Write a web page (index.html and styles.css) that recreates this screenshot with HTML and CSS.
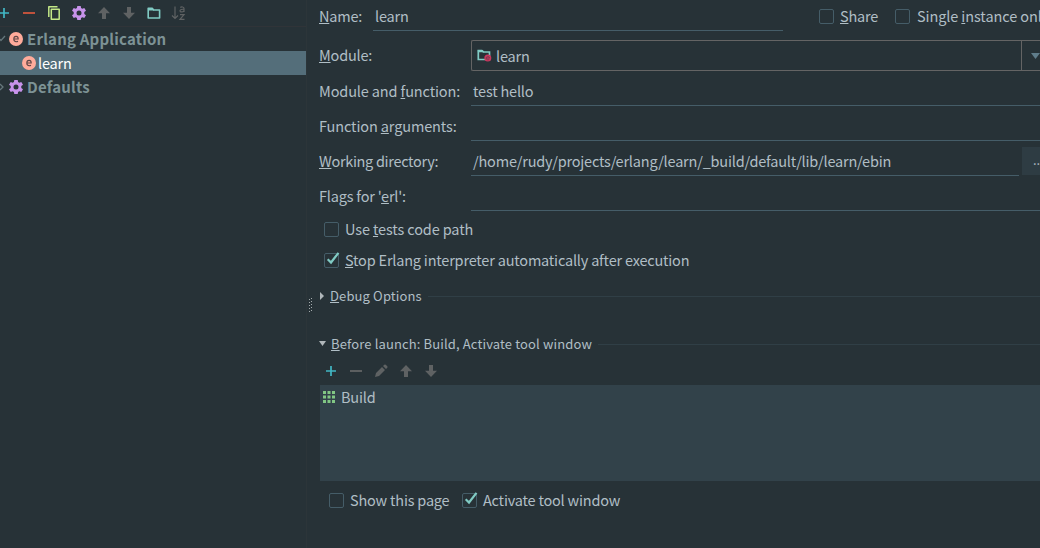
FILE: index.html
```html
<!DOCTYPE html>
<html lang="en">
<head>
<meta charset="utf-8">
<title>Run/Debug Configurations</title>
<link rel="stylesheet" href="styles.css">
</head>
<body>
<svg class="defs" width="0" height="0">
  <symbol id="plus" viewBox="0 0 16 16"><path d="M8 3v10M3 8h10" stroke="#42b7c4" stroke-width="1.7" fill="none"/></symbol>
  <symbol id="minus" viewBox="0 0 16 16"><path d="M2 8h12" stroke="currentColor" stroke-width="1.900" fill="none"/></symbol>
  <symbol id="copy" viewBox="0 0 16 16"><path d="M11.500 1.700H2.800V12M5.300 4.300h7.900v10H5.300z" stroke="#c3e887" stroke-width="1.500" fill="none" stroke-linejoin="round"/></symbol>
  <symbol id="gear" viewBox="0 0 16 16"><path fill="#c792ea" fill-rule="evenodd" d="M6.300 1h3.400l.4 2 1.200.7 2-.8 1.700 2.800L13.300 7v2l1.700 1.300-1.700 2.800-2-.8-1.200.7-.4 2H6.300l-.4-2-1.200-.7-2 .8L1 10.300 2.700 9V7L1 5.700l1.700-2.800 2 .8L5.900 3zM8 5.500a2.500 2.500 0 1 0 0 5 2.500 2.500 0 0 0 0-5z"/></symbol>
  <symbol id="up" viewBox="0 0 16 16"><path d="M8 2l6 6.300h-4V14H6V8.300H2z" fill="#5f6263"/></symbol>
  <symbol id="down" viewBox="0 0 16 16"><path d="M8 14l6-6.300h-4V2H6v5.700H2z" fill="#5f6263"/></symbol>
  <symbol id="folder" viewBox="0 0 16 16"><path d="M2.200 3.300h4L7.700 5h5.900v8H2.200z" stroke="#80cbc4" stroke-width="1.600" fill="none" stroke-linejoin="round"/><path d="M2 3h4.500l1.500 2.500H2z" fill="#80cbc4"/></symbol>
  <symbol id="erl" viewBox="0 0 16 16"><circle cx="8" cy="8" r="7" fill="#ffab9b"/><path d="M5.900 8h4.300c0-1.700-.8-2.600-2.100-2.600S5.800 6.500 5.800 8.100s.9 2.600 2.400 2.600c.7 0 1.300-.2 1.800-.5" stroke="#5d4545" stroke-width="1.100" fill="none"/></symbol>
  <symbol id="pencil" viewBox="0 0 16 16"><path d="M2 14l1-4 6-6 3 3-6 6zM10 3l1.300-1.300q.7-.5 1.400 0l1.600 1.600q.5.7 0 1.400L13 6z" fill="#5f6263"/></symbol>
  <symbol id="tick" viewBox="0 0 16 16"><path d="M3.700 7.200L7 10.500 14.500.8" stroke="#80cbc4" stroke-width="2.200" fill="none"/></symbol>
</svg>
<div class="dialog">
  <aside class="sidebar">
    <div class="toolbar">
      <svg class="icon"><use href="#plus"/></svg>
      <svg class="icon danger"><use href="#minus"/></svg>
      <svg class="icon"><use href="#copy"/></svg>
      <svg class="icon"><use href="#gear"/></svg>
      <svg class="icon"><use href="#up"/></svg>
      <svg class="icon"><use href="#down"/></svg>
      <svg class="icon"><use href="#folder"/></svg>
      <svg class="icon" viewBox="0 0 16 16" fill="none" stroke="#5f6263" stroke-width="1.200"><path d="M4 1.500v12M1 10.500l3 3 3-3M9.300 2.500c1-.9 3.700-.8 3.700 1V7M13 4.300c-2-.2-4 .1-4 1.500 0 1.600 3 1.500 4 0M9 9.700h4L9 14.300h4.500"/></svg>
    </div>
    <div class="node group">
      <svg class="chevron" viewBox="0 0 6 8"><path d="M0 4l1 1.500L5 1" /></svg>
      <svg class="icon"><use href="#erl"/></svg><span>Erlang Application</span>
    </div>
    <div class="node selected">
      <svg class="icon"><use href="#erl"/></svg><span>learn</span>
    </div>
    <div class="node group">
      <svg class="chevron" viewBox="0 0 6 8"><path d="M0 1l3 3-3 3"/></svg>
      <svg class="icon"><use href="#gear"/></svg><span>Defaults</span>
    </div>
  </aside>
  <div class="splitter"><svg width="6" height="16"><path d="M.5 1v14M2.500 0v14" stroke="#a5acae" stroke-width="1" stroke-dasharray="1 2"/></svg></div>
  <main class="panel">
    <div class="name-row">
      <label class="name-label"><u>N</u>ame:</label>
      <div class="field name-field">learn</div>
      <label class="check share"><i class="box"></i><span><u>S</u>hare</span></label>
      <label class="check single"><i class="box"></i><span>Single <u>i</u>nstance only</span></label>
    </div>
    <div class="row module-row">
      <label><u>M</u>odule:</label>
      <div class="combo">
        <div class="combo-value">
          <svg class="module-icon" viewBox="0 0 15 13"><path d="M1.300 1.500h3.500L6.500 3h6v7.500H1.300z" stroke="#80cbc4" stroke-width="1.700" fill="none"/><path d="M.8 1h4.500l1.500 2.200h-6z" fill="#80cbc4"/><circle cx="10.800" cy="9" r="3.500" fill="#c8375e"/><path d="M9 9h3.500c0-2-3.300-2-3.300.2 0 1.800 2 2 3 1.200" stroke="#70384b" fill="none" stroke-width=".8"/></svg>
          <span>learn</span>
        </div>
        <div class="combo-arrow"><svg width="10" height="6"><path d="M1 0h9L5.500 6z" fill="#607d8b"/></svg></div>
      </div>
    </div>
    <div class="row"><label class="wide">Module and <u>f</u>unction:</label><div class="field">test hello</div></div>
    <div class="row"><label class="wide">Function <u>a</u>rguments:</label><div class="field"></div></div>
    <div class="row"><label class="tight"><u>W</u>orking directory:</label><div class="field path">/home/rudy/projects/erlang/learn/_build/default/lib/learn/ebin</div><div class="browse">...</div></div>
    <div class="row"><label>Flags for '<u>e</u>rl':</label><div class="field"></div></div>
    <div class="options">
      <label class="check wide"><i class="box"></i><span>Use <u>t</u>ests code path</span></label>
      <label class="check"><i class="box"><svg><use href="#tick"/></svg></i><span><u>S</u>top Erlang interpreter automatically after execution</span></label>
    </div>
    <div class="section">
      <svg class="twisty" viewBox="0 0 8 8"><path d="M1 0l4 4-4 4z"/></svg><span><u>D</u>ebug Options</span><hr>
    </div>
    <div class="section before">
      <svg class="twisty" viewBox="0 0 8 8"><path d="M0 1h7L3.500 6z"/></svg><span><u>B</u>efore launch: Build, Activate tool window</span><hr>
    </div>
    <div class="task-tools">
      <svg class="icon"><use href="#plus"/></svg>
      <svg class="icon muted"><use href="#minus"/></svg>
      <svg class="icon"><use href="#pencil"/></svg>
      <svg class="icon"><use href="#up"/></svg>
      <svg class="icon"><use href="#down"/></svg>
    </div>
    <div class="tasks">
      <div class="task"><svg width="12" height="12" fill="#81c784"><path d="M0 0h3v3H0zM4.500 0h3v3h-3zM9 0h3v3H9zM0 4.500h3v3H0zM4.500 4.500h3v3h-3zM9 4.500h3v3H9zM0 9h3v3H0zM4.500 9h3v3h-3zM9 9h3v3H9z"/></svg><span>Build</span></div>
    </div>
    <div class="footer">
      <label class="check"><i class="box"></i><span>Show this page</span></label>
      <label class="check"><i class="box"><svg><use href="#tick"/></svg></i><span>Activate tool window</span></label>
    </div>
  </main>
</div>
</body>
</html>
```
FILE: styles.css
```css
* { box-sizing: border-box; }
body {
  margin: 0;
  height: 548px;
  overflow: hidden;
  background: #273237;
  color: #b0bec5;
  font: 14.5px/24px "Noto Sans CJK SC", "Noto Sans", sans-serif;
  letter-spacing: -0.2px;
  white-space: nowrap;
}
svg { display: block; flex: none; }
.defs { position: absolute; }
u { text-decoration-thickness: 1px; text-underline-offset: 1px; text-decoration-skip-ink: none; }
.icon { width: 16px; height: 16px; }
.danger { color: #c8553d; }
.muted { color: #5f6263; }
.wide { letter-spacing: -0.13px; }
.tight { letter-spacing: -0.31px; }
.dialog { display: flex; height: 548px; }

.sidebar { width: 306px; flex: none; overflow: hidden; }
.toolbar { display: flex; align-items: center; gap: 9px; height: 27px; padding-left: 0; margin-left: -4px; border-bottom: 1px solid #303438; }
.node { display: flex; align-items: center; height: 24px; }
.node span { margin-left: 3px; line-height: 22px; }
.group { color: #7d9295; font-size: 15px; font-weight: 700; letter-spacing: 0.2px; }
.chevron { width: 6px; height: 8px; margin-right: 2px; fill: none; stroke: #66777c; stroke-width: 1.3; }
.selected { padding-left: 21px; background: #546e7a; color: #fff; }
.selected span { margin-left: 1px; }

.splitter { width: 13px; flex: none; padding: 298px 0 0 2px; border-left: 1px solid #2c3539; }

.panel { width: 721px; flex: none; overflow: hidden; }
.name-row { display: flex; height: 40px; }
.name-label { width: 54px; flex: none; line-height: 32px; }
.field { height: 31px; line-height: 32px; padding-left: 2px; border-bottom: 1px solid #455d68; flex: 1; }
.name-field { flex: none; width: 410px; margin-right: 36px; }
.name-row .check { height: 33px; flex: none; }
.name-row .check span { line-height: 22px; margin-top: -1px; }
.name-row .share { width: 76px; }
.name-row .single { gap: 7px; letter-spacing: -0.1px; }
.check { display: flex; align-items: center; gap: 6px; height: 24px; }
.box { width: 15px; height: 15px; flex: none; border: 1px solid #455d68; border-radius: 2px; }
.box svg { width: 16px; height: 16px; margin: -2px 0 0 -1px; overflow: visible; }

.row { display: flex; height: 35px; padding-top: 4px; }
.row label { width: 152px; flex: none; line-height: 32px; }
.row.module-row { padding: 0; height: 31px; }
.module-row label { line-height: 30px; }
.combo { flex: 1; display: flex; height: 31px; border: 1px solid #646464; border-right: 0; border-radius: 2px 0 0 2px; }
.combo-value { display: flex; align-items: center; gap: 4px; flex: 1; padding-left: 5px; }
.module-icon { width: 15px; height: 13px; }
.combo-arrow { width: 19px; border-left: 1px solid #646464; padding: 12px 0 0 8px; overflow: hidden; }
.path { margin-right: 3px; }
.browse { width: 18px; height: 28px; margin-top: 2px; padding: 1px 0 0 11px; background: #2e3c43; font-size: 13px; letter-spacing: 0; overflow: hidden; }

.options { display: flex; flex-direction: column; gap: 7px; padding: 6px 0 0 5px; }
.section { display: flex; align-items: center; height: 24px; margin-top: 12px; font-size: 13px; letter-spacing: 0.13px; }
.section span { margin: 0 6px 0 3px; }
.section hr { flex: 1; border: 0; margin: 0; height: 1px; background: #303f46; }
.before { margin-top: 24px; }
.before span { margin-left: 4px; }
.twisty { width: 8px; height: 8px; fill: #b0b7ba; }
.task-tools { display: flex; align-items: center; gap: 9px; height: 29px; padding-left: 4px; }
.tasks { height: 96px; margin-left: 1px; background: #32424a; }
.task { display: flex; align-items: center; gap: 6px; height: 24px; padding-left: 3px; }
.footer { display: flex; gap: 12.5px; padding: 7px 0 0 10px; }
```
